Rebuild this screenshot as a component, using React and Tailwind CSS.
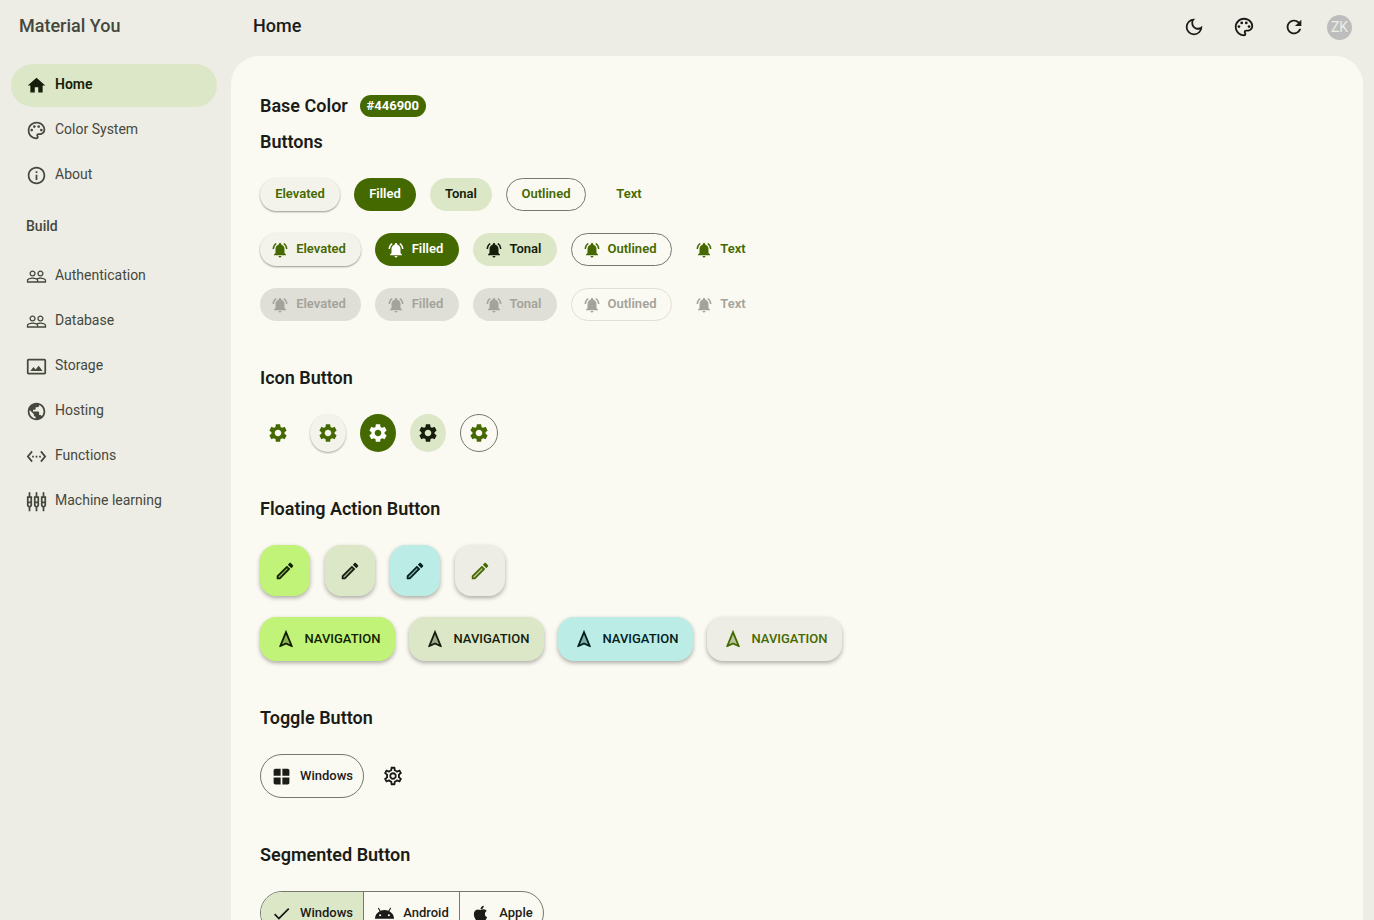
import React from "react";
import {
  MdHome, MdOutlinePalette, MdOutlineInfo, MdPeopleOutline,
  MdOutlinePhotoSizeSelectActual, MdPublic, MdSettingsEthernet, MdOutlineSettingsInputComponent,
  MdNotificationsActive, MdSettings, MdOutlineSettings, MdRefresh, MdOutlineDarkMode,
  MdWindow, MdAndroid, MdCheck,
} from "react-icons/md";

function EditIcon({ className }) {
  return (
    <svg viewBox="0 0 24 24" fill="currentColor" aria-hidden="true" className={className}>
      <path opacity=".3" d="M5 18.08V19h.92l9.06-9.06-.92-.92z" />
      <path d="M20.71 7.04c.39-.39.39-1.02 0-1.41l-2.34-2.34c-.2-.2-.45-.29-.71-.29s-.51.1-.7.29l-1.83 1.83 3.75 3.75 1.83-1.83zM3 17.25V21h3.75L17.81 9.94l-3.75-3.75L3 17.25zM5.92 19H5v-.92l9.06-9.06.92.92L5.92 19z" />
    </svg>
  );
}

function NavigationIcon({ className }) {
  return (
    <svg viewBox="0 0 24 24" fill="currentColor" aria-hidden="true" className={className}>
      <path opacity=".3" d="M7.72 17.7l3.47-1.53.81-.36.81.36 3.47 1.53L12 7.27z" />
      <path d="M4.5 20.29l.71.71L12 18l6.79 3 .71-.71L12 2 4.5 20.29zm8.31-4.12l-.81-.36-.81.36-3.47 1.53L12 7.27l4.28 10.43-3.47-1.53z" />
    </svg>
  );
}

function AppleIcon({ className }) {
  return (
    <svg viewBox="0 0 24 24" fill="currentColor" aria-hidden="true" className={className}>
      <path d="M17.05 20.28c-.98.95-2.05.8-3.08.35-1.09-.46-2.09-.48-3.24 0-1.44.62-2.2.44-3.06-.35C2.79 15.25 3.51 7.59 9.05 7.31c1.35.07 2.29.74 3.08.8 1.18-.24 2.31-.93 3.57-.84 1.51.12 2.65.72 3.4 1.8-3.12 1.87-2.38 5.98.48 7.13-.57 1.5-1.31 2.99-2.54 4.09zM12.03 7.25c-.15-2.23 1.66-4.07 3.74-4.25.29 2.58-2.34 4.5-3.74 4.25z" />
    </svg>
  );
}

const mainLinks = [
  { label: "Home", Icon: MdHome, active: true },
  { label: "Color System", Icon: MdOutlinePalette },
  { label: "About", Icon: MdOutlineInfo },
];

const buildLinks = [
  { label: "Authentication", Icon: MdPeopleOutline },
  { label: "Database", Icon: MdPeopleOutline },
  { label: "Storage", Icon: MdOutlinePhotoSizeSelectActual },
  { label: "Hosting", Icon: MdPublic },
  { label: "Functions", Icon: MdSettingsEthernet },
  { label: "Machine learning", Icon: MdOutlineSettingsInputComponent },
];

const buttonKinds = [
  { label: "Elevated", width: "wide", style: "bg-[#f4f3eb] text-[#446900] shadow-[0_1px_2px_rgba(0,0,0,0.4)]", off: "bg-[#dfded7]" },
  { label: "Filled", width: "narrow", style: "bg-[#446900] text-white", off: "bg-[#dfded7]" },
  { label: "Tonal", width: "narrow", style: "bg-[#dce7c8] text-[#161e0b]", off: "bg-[#dfded7]" },
  { label: "Outlined", width: "wide", style: "border border-[#75796c] text-[#446900]", off: "border border-[#dfded7]" },
  { label: "Text", width: "plain", style: "text-[#446900]", off: "" },
];

const plainWidths = { wide: "min-w-20", narrow: "min-w-[62px]", plain: "min-w-[58px]" };
const iconWidths = { wide: "min-w-[101px] pr-1", narrow: "min-w-[84px] pr-1", plain: "min-w-[73px] pr-1" };

const iconButtons = [
  { name: "Standard settings", style: "w-9 text-[#446900]" },
  { name: "Elevated settings", style: "w-9 bg-[#f4f3eb] text-[#446900] shadow-[0_1px_2px_rgba(0,0,0,0.35)]" },
  { name: "Filled settings", style: "w-9 bg-[#446900] text-white" },
  { name: "Tonal settings", style: "w-9 bg-[#dce7c8] text-[#161e0b]" },
  { name: "Outlined settings", style: "w-[38px] border border-[#75796c] text-[#446900]" },
];

const fabs = [
  { name: "primary", style: "bg-[#c1f378] text-[#111f00]" },
  { name: "secondary", style: "bg-[#dce7c8] text-[#161e0b]" },
  { name: "tertiary", style: "bg-[#bbece6] text-[#00201e]" },
  { name: "surface", style: "bg-[#eeede5] text-[#446900]" },
];

const fabShadow = "shadow-[0_2px_4px_rgba(0,0,0,0.32)]";

function NavLink({ label, Icon, active }) {
  return (
    <a
      href="#"
      aria-current={active ? "page" : undefined}
      className={`flex h-[43px] items-center gap-2 rounded-full pl-[15px] text-sm ${
        active ? "bg-[#dce7c8] font-semibold text-[#161e0b]" : "text-[#45483d]"
      }`}
    >
      <Icon className="size-[21px]" />
      <span className="pb-[3px]">{label}</span>
    </a>
  );
}

function Section({ title, children }) {
  return (
    <section>
      <h2 className="mb-[22px] text-lg leading-7 font-semibold">{title}</h2>
      {children}
    </section>
  );
}

function ButtonRow({ icon, disabled }) {
  return (
    <div className="flex gap-[14px]">
      {buttonKinds.map((kind) => (
        <button
          key={kind.label}
          type="button"
          disabled={disabled}
          className={`flex h-[33px] items-center justify-center gap-[7px] rounded-full text-[13px] font-semibold ${
            icon ? iconWidths[kind.width] : plainWidths[kind.width]
          } ${disabled ? `${kind.off} text-[#a3a39b]` : kind.style}`}
        >
          {icon && <MdNotificationsActive className="size-[18px]" />}
          <span className="pb-[2px]">{kind.label}</span>
        </button>
      ))}
    </div>
  );
}

export default function App() {
  return (
    <div className="flex h-screen overflow-hidden bg-[#eeede5] font-['Roboto',sans-serif] text-[#1b1c18]">
      <aside className="w-[231px] shrink-0 pr-[14px] pl-[11px]">
        <div className="flex h-16 items-start pt-3 pl-2 text-lg leading-7 font-medium text-[#45483d]">Material You</div>
        <nav aria-label="Main" className="flex flex-col gap-[2px]">
          {mainLinks.map((link) => <NavLink key={link.label} {...link} />)}
        </nav>
        <h2 className="py-[19px] pl-[15px] text-sm font-medium text-[#45483d]">Build</h2>
        <nav aria-label="Build" className="flex flex-col gap-[2px]">
          {buildLinks.map((link) => <NavLink key={link.label} {...link} />)}
        </nav>
      </aside>

      <div className="flex min-w-0 flex-1 flex-col pr-[11px]">
        <header className="flex h-14 shrink-0 items-center pr-[11px] pb-[2px] pl-[22px]">
          <h1 className="flex-1 pb-[2px] text-lg leading-7 font-medium">Home</h1>
          <div className="flex items-center gap-[15px]">
            <div className="flex items-center gap-[14px]">
              <button type="button" aria-label="Dark mode" className="flex size-9 items-center justify-center"><MdOutlineDarkMode className="size-[22px]" /></button>
              <button type="button" aria-label="Palette" className="flex size-9 items-center justify-center"><MdOutlinePalette className="size-[22px]" /></button>
              <button type="button" aria-label="Refresh" className="flex size-9 items-center justify-center"><MdRefresh className="size-[22px]" /></button>
            </div>
            <button type="button" aria-label="Account ZK" className="flex size-[25px] items-center justify-center rounded-full bg-[#bdbdbd] text-sm text-[#eeede5]">ZK</button>
          </div>
        </header>

        <main className="flex-1 overflow-y-auto rounded-t-[28px] bg-[#fbfaf2] px-[29px] pt-9 pb-11 [scrollbar-width:none]">
          <div className="mb-2 flex items-center gap-3">
            <h2 className="text-lg leading-7 font-semibold">Base Color</h2>
            <span className="flex h-[22px] w-[66px] items-center justify-center rounded-full bg-[#446900] text-[13px] font-bold text-white">#446900</span>
          </div>

          <div className="flex flex-col gap-[43px]">
            <Section title="Buttons">
              <div className="flex flex-col gap-[22px]">
                <ButtonRow />
                <ButtonRow icon />
                <ButtonRow icon disabled />
              </div>
            </Section>

            <Section title="Icon Button">
              <div className="flex gap-[14px]">
                {iconButtons.map((b) => (
                  <button key={b.name} type="button" aria-label={b.name} className={`flex h-[38px] items-center justify-center rounded-[50%] ${b.style}`}>
                    <MdSettings className="size-[22px]" />
                  </button>
                ))}
              </div>
            </Section>

            <Section title="Floating Action Button">
              <div className="flex gap-[15px]">
                {fabs.map((f) => (
                  <button key={f.name} type="button" aria-label={`Edit ${f.name}`} className={`flex h-[51px] w-[50px] items-center justify-center rounded-2xl ${fabShadow} ${f.style}`}>
                    <EditIcon className="size-[22px]" />
                  </button>
                ))}
              </div>
              <div className="mt-[21px] flex gap-[14px]">
                {fabs.map((f) => (
                  <button key={f.name} type="button" className={`flex h-11 w-[135px] items-center justify-center gap-2 rounded-2xl text-[13px] font-medium ${fabShadow} ${f.style}`}>
                    <NavigationIcon className="size-[22px]" />
                    <span>NAVIGATION</span>
                  </button>
                ))}
              </div>
            </Section>

            <Section title="Toggle Button">
              <div className="flex items-center gap-[7px]">
                <button type="button" aria-pressed="false" className="flex h-11 w-[104px] items-center justify-center gap-2 rounded-full border border-[#75796c] text-[13px] font-medium">
                  <MdWindow className="size-[21px]" />
                  <span>Windows</span>
                </button>
                <button type="button" aria-label="Toggle settings" aria-pressed="false" className="flex size-11 items-center justify-center">
                  <MdOutlineSettings className="size-[22px]" />
                </button>
              </div>
            </Section>

            <Section title="Segmented Button">
              <div className="flex w-fit overflow-hidden rounded-full border border-[#75796c] text-[13px] font-medium">
                <button type="button" aria-pressed="true" className="flex h-[42px] w-[102px] items-center justify-center gap-2 bg-[#dce7c8]">
                  <MdCheck className="size-[21px]" />
                  <span>Windows</span>
                </button>
                <button type="button" aria-pressed="false" className="flex h-[42px] w-24 items-center justify-center gap-2 border-l border-[#75796c]">
                  <MdAndroid className="size-[21px]" />
                  <span>Android</span>
                </button>
                <button type="button" aria-pressed="false" className="flex h-[42px] w-[84px] items-center justify-center gap-2 border-l border-[#75796c]">
                  <AppleIcon className="size-[21px]" />
                  <span>Apple</span>
                </button>
              </div>
            </Section>
          </div>
        </main>
      </div>
    </div>
  );
}
